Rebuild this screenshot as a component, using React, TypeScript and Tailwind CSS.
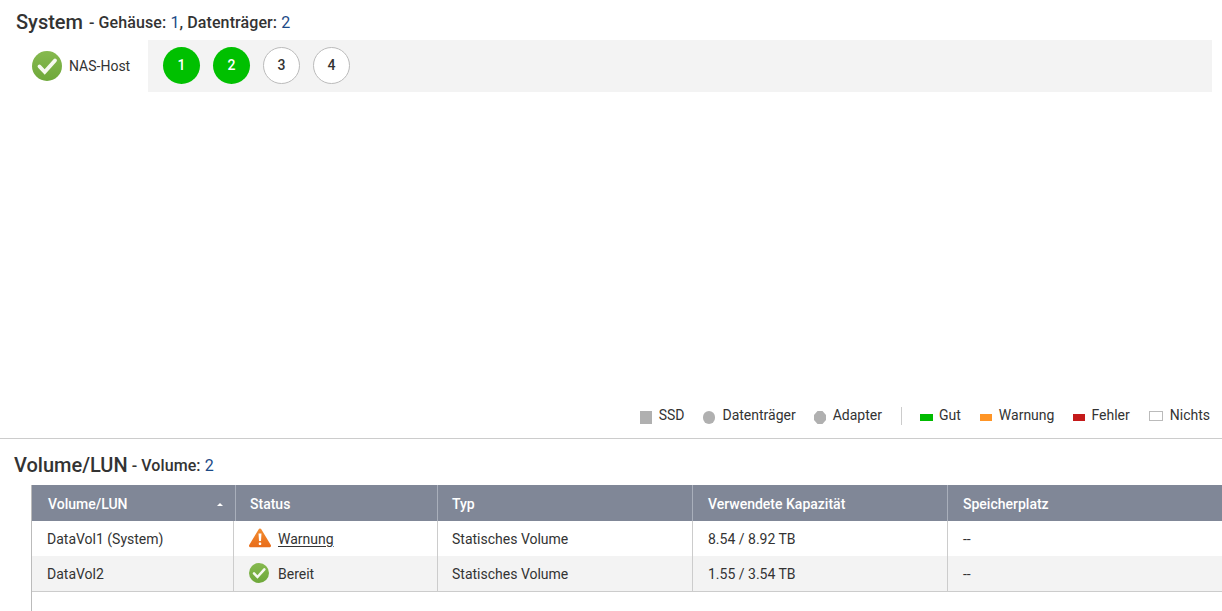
const CheckIcon = ({ size }: { size: number }) => (
  <svg width={size} height={size} viewBox="0 0 30 30" className="shrink-0">
    <defs>
      <linearGradient id="okGrad" x1="0" y1="0" x2="0" y2="1">
        <stop offset="0" stopColor="#86b94f" />
        <stop offset="1" stopColor="#6ea83a" />
      </linearGradient>
    </defs>
    <circle cx="15" cy="15" r="15" fill="url(#okGrad)" />
    <path d="M7.5 15.5l5.2 5.5L23 9.5" fill="none" stroke="#f6f9f0" strokeWidth="3.8" strokeLinecap="round" />
  </svg>
);

const WarnIcon = () => (
  <svg width="22" height="20" viewBox="0 0 22 20" className="shrink-0">
    <defs>
      <linearGradient id="warnGrad" x1="0" y1="0" x2="0" y2="1">
        <stop offset="0" stopColor="#f28a2e" />
        <stop offset="1" stopColor="#e96f1c" />
      </linearGradient>
    </defs>
    <path d="M11 2 L20.5 17.8 L1.5 17.8 Z" fill="url(#warnGrad)" stroke="url(#warnGrad)" strokeWidth="3" strokeLinejoin="round" />
    <path d="M9.5 5.5h3l-.5 7.5h-2z" fill="#fff" />
    <rect x="9.8" y="14.5" width="2.4" height="2.4" rx="0.6" fill="#fff" />
  </svg>
);

const AdapterIcon = () => (
  <svg width="12" height="13" viewBox="0 0 12 13" className="mr-[7px] mt-[4px] shrink-0">
    <path d="M3.5 0h5L12 4v5l-3.5 4h-5L0 9V4z" fill="#b0b0b0" />
  </svg>
);

const Slot = ({ n, on }: { n: number; on?: boolean }) => (
  <div
    className={`flex h-[37px] w-[37px] items-center justify-center rounded-full text-[14px] font-medium ${
      on ? 'bg-[#00c000] text-white' : 'border border-[#bbbbbb] bg-white text-[#333333]'
    }`}
  >
    {n}
  </div>
);

const legend = [
  { label: 'Gut', box: 'mr-[6px] mt-[4px] h-[7px] w-[13px] bg-[#00bb00]', gap: 'mr-[19px]' },
  { label: 'Warnung', box: 'mr-[7px] mt-[4px] h-[7px] w-[12px] bg-[#ff9526]', gap: 'mr-[19px]' },
  { label: 'Fehler', box: 'mr-[6px] mt-[4px] h-[7px] w-[12px] bg-[#c41a1a]', gap: 'mr-[19px]' },
  { label: 'Nichts', box: 'mr-[7px] mt-[1px] h-[10px] w-[14px] border border-[#bbbbbb] bg-white', gap: '' },
];

const rows = [
  { name: 'DataVol1 (System)', warn: true, cap: '8.54 / 8.92 TB', bg: 'bg-white' },
  { name: 'DataVol2', warn: false, cap: '1.55 / 3.54 TB', bg: 'bg-[#f3f3f3]' },
];

const headCell = 'flex h-full items-center border-r border-[#a9afbb] pt-[2px] text-[14px] font-medium text-white';
const bodyCell = 'flex h-full items-center border-r border-[#cccccc] pt-[1px]';

export default function App() {
  return (
    <div className="h-[611px] w-[1222px] overflow-hidden bg-white font-['Roboto',sans-serif] text-[#333333]">
      <div className="flex h-[40px] items-center pl-[16px] pt-[4px]">
        <span className="text-[20px] font-medium">System</span>
        <span className="ml-[6px] pt-[1px] text-[16px] font-medium tracking-[0.1px]">
          - Gehäuse: <span className="font-normal text-[#1c4a86]">1</span>, Datenträger: <span className="font-normal text-[#1c4a86]">2</span>
        </span>
      </div>

      <div className="flex h-[52px] pr-[10px]">
        <div className="flex w-[148px] items-center pl-[32px]">
          <CheckIcon size={30} />
          <span className="ml-[7px] text-[14px]">NAS-Host</span>
        </div>
        <div className="flex flex-1 items-center gap-[13px] bg-[#f3f3f3] pb-[1px] pl-[15px]">
          <Slot n={1} on />
          <Slot n={2} on />
          <Slot n={3} />
          <Slot n={4} />
        </div>
      </div>

      <div className="h-[312px]" />

      <div className="flex h-[35px] items-center justify-end border-b border-[#cccccc] pb-[11px] pr-[12px] text-[14px]">
        <span className="mr-[7px] mt-[4px] h-[13px] w-[12px] bg-[#b0b0b0]" />
        <span className="mr-[19px]">SSD</span>
        <span className="mr-[7px] mt-[4px] h-[13px] w-[12px] rounded-full bg-[#b0b0b0]" />
        <span className="mr-[18px]">Datenträger</span>
        <AdapterIcon />
        <span className="mr-[19px]">Adapter</span>
        <span className="mr-[18px] h-[18px] w-px bg-[#cccccc]" />
        {legend.map((l) => (
          <div key={l.label} className={`flex items-center ${l.gap}`}>
            <span className={l.box} />
            <span>{l.label}</span>
          </div>
        ))}
      </div>

      <div className="flex h-[46px] items-center pl-[14px] pt-[6px]">
        <span className="text-[20px] font-medium">Volume/LUN</span>
        <span className="ml-[4px] pt-[1px] text-[16px] font-medium tracking-[0.1px]">
          - Volume: <span className="font-normal text-[#1c4a86]">2</span>
        </span>
      </div>

      <div className="ml-[31px] h-[126px] border-l border-[#bbbbbb]">
        <div className="grid h-[36px] grid-cols-[204px_202px_255px_255px_1fr] bg-[#808797]">
          <div className={`${headCell} justify-between pl-[16px] pr-[12px]`}>
            Volume/LUN
            <span className="h-0 w-0 border-x-[3px] border-b-[3px] border-x-transparent border-b-white" />
          </div>
          <div className={`${headCell} pl-[14px]`}>Status</div>
          <div className={`${headCell} pl-[14px]`}>Typ</div>
          <div className={`${headCell} pl-[15px]`}>Verwendete Kapazität</div>
          <div className={`${headCell} border-r-0 pl-[15px]`}>Speicherplatz</div>
        </div>
        {rows.map((r) => (
          <div key={r.name} className={`grid h-[35px] grid-cols-[202px_204px_255px_255px_1fr] text-[14px] ${r.bg}`}>
            <div className={`${bodyCell} pl-[15px]`}>{r.name}</div>
            <div className={`${bodyCell} pl-[15px]`}>
              <span className="mb-[3px] flex">{r.warn ? <WarnIcon /> : <CheckIcon size={20} />}</span>
              <span className={r.warn ? 'ml-[7px] underline underline-offset-2' : 'ml-[9px]'}>
                {r.warn ? 'Warnung' : 'Bereit'}
              </span>
            </div>
            <div className={`${bodyCell} pl-[14px]`}>Statisches Volume</div>
            <div className={`${bodyCell} pl-[15px]`}>{r.cap}</div>
            <div className="flex h-full items-center pl-[15px] pt-[1px]">--</div>
          </div>
        ))}
        <div className="border-t border-[#cccccc]" />
      </div>
    </div>
  );
}
